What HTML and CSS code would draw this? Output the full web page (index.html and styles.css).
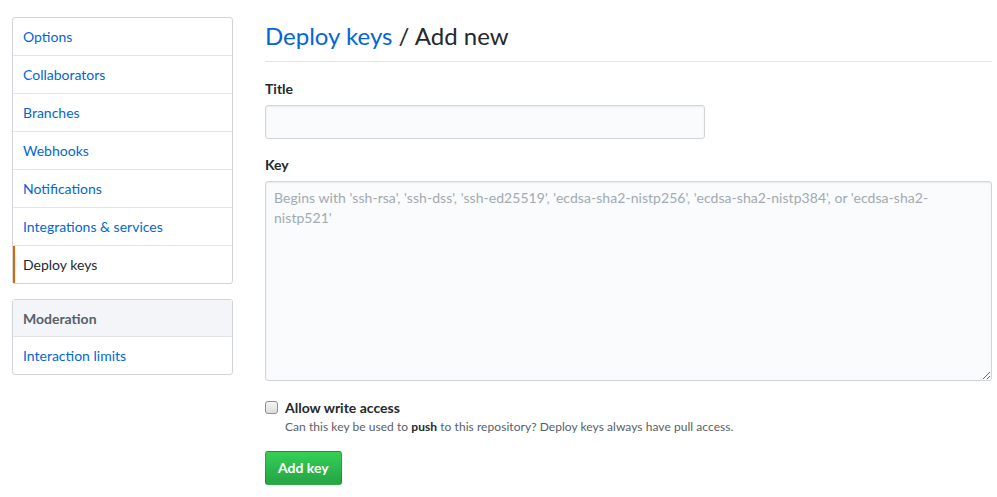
FILE: index.html
```html
<!DOCTYPE html>
<html>
<head>
<meta charset="utf-8">
<link rel="stylesheet" href="styles.css">
</head>
<body>
<div class="layout">
  <aside class="sidebar">
    <nav class="menu">
      <a class="menu-item" href="#">Options</a>
      <a class="menu-item" href="#">Collaborators</a>
      <a class="menu-item" href="#">Branches</a>
      <a class="menu-item" href="#">Webhooks</a>
      <a class="menu-item" href="#">Notifications</a>
      <a class="menu-item" href="#">Integrations &amp; services</a>
      <a class="menu-item selected" href="#">Deploy keys</a>
    </nav>
    <nav class="menu">
      <div class="menu-heading">Moderation</div>
      <a class="menu-item" href="#">Interaction limits</a>
    </nav>
  </aside>
  <main class="main">
    <div class="subhead">
      <h2 class="subhead-title"><a href="#">Deploy keys</a> / Add new</h2>
    </div>
    <form>
      <div class="form-group">
        <label class="form-label">Title</label>
        <input class="form-input title-input" type="text">
      </div>
      <div class="form-group">
        <label class="form-label">Key</label>
        <textarea class="form-input key-input" placeholder="Begins with 'ssh-rsa', 'ssh-dss', 'ssh-ed25519', 'ecdsa-sha2-nistp256', 'ecdsa-sha2-nistp384', or 'ecdsa-sha2-nistp521'"></textarea>
      </div>
      <div class="checkbox-group">
        <label class="checkbox-label"><span class="checkbox"></span> Allow write access</label>
        <p class="note">Can this key be used to <strong>push</strong> to this repository? Deploy keys always have pull access.</p>
      </div>
      <button class="btn-primary" type="button">Add key</button>
    </form>
  </main>
</div>
</body>
</html>
```

FILE: styles.css
```css
html, body {
  margin: 0;
  padding: 0;
  background: #fff;
}
body {
  font-family: "Segoe UI", Lato, "Noto Sans", "Liberation Sans", sans-serif;
  font-size: 14px;
  line-height: 1.5;
  color: #24292e;
}
.layout {
  display: flex;
  gap: 32px;
  padding: 17px 5px 0 12px;
}
.sidebar {
  width: 221px;
  flex: none;
}
.menu {
  border: 1px solid #d1d5da;
  border-radius: 3px;
  margin-bottom: 15px;
  background: #fff;
}
.menu-item {
  display: block;
  padding: 8px 10px;
  height: 21px;
  border-bottom: 1px solid #e1e4e8;
  color: #0366d6;
  text-decoration: none;
}
.menu-item:last-child {
  border-bottom: 0;
}
.menu-item.selected {
  color: #24292e;
  border-left: 2px solid #e36209;
  padding-left: 8px;
  cursor: default;
}
.menu-heading {
  padding: 8px 10px;
  height: 20px;
  background: #f3f5f8;
  border-bottom: 1px solid #e1e4e8;
  color: #586069;
  font-weight: 700;
}
.main {
  flex: 1;
}
.subhead {
  border-bottom: 1px solid #e1e4e8;
  padding-bottom: 6px;
  margin-bottom: 16px;
}
.subhead-title {
  margin: 0;
  font-size: 24px;
  font-weight: 400;
  line-height: 38px;
}
.subhead-title a {
  color: #0366d6;
  text-decoration: none;
}
.form-group {
  margin-bottom: 15px;
}
.form-label {
  display: block;
  font-weight: 700;
  margin-bottom: 6px;
}
.form-input {
  display: block;
  box-sizing: border-box;
  background: #fafbfc;
  border: 1px solid #d1d5da;
  border-radius: 3px;
  box-shadow: inset 0 1px 2px rgba(27,31,35,0.075);
  font-family: inherit;
  font-size: 14px;
  line-height: 20px;
  padding: 6px 8px;
  color: #24292e;
}
.title-input {
  width: 440px;
  height: 34px;
}
.key-input {
  width: 100%;
  height: 200px;
  resize: vertical;
  padding-right: 30px;
  letter-spacing: 0.05px;
}
.key-input::placeholder {
  color: #a3aab1;
}
.checkbox-group {
  margin: 17px 0 15px;
  padding-left: 20px;
  position: relative;
}
.checkbox-label {
  font-weight: 700;
  display: block;
  line-height: 20px;
}
.checkbox {
  position: absolute;
  left: 0;
  top: 3px;
  box-sizing: border-box;
  width: 13px;
  height: 13px;
  border: 1px solid #8f8f8f;
  border-radius: 3px;
  background: linear-gradient(#f4f4f4, #dedede);
}
.note {
  margin: 0;
  font-size: 12px;
  color: #586069;
  line-height: 18px;
  letter-spacing: 0.05px;
}
.note strong {
  color: #24292e;
}
.btn-primary {
  display: block;
  font-family: inherit;
  font-size: 14px;
  font-weight: 700;
  line-height: 20px;
  padding: 6px 12px;
  height: 34px;
  color: #fff;
  background-color: #28a745;
  background-image: linear-gradient(-180deg, #34d058 0%, #28a745 90%);
  border: 1px solid rgba(27,31,35,0.2);
  border-radius: 3px;
}
```
